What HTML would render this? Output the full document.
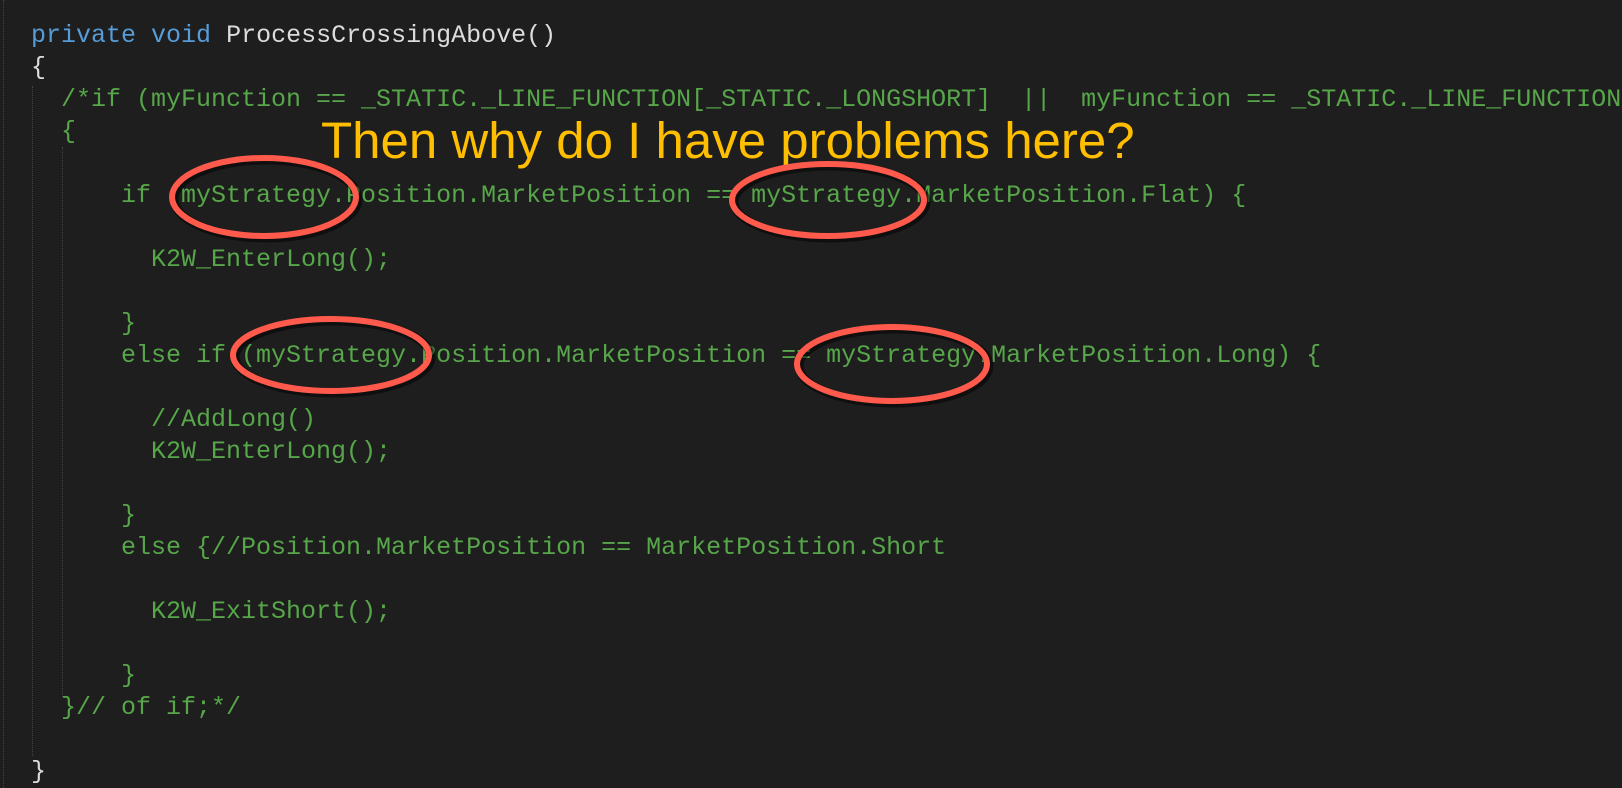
<!DOCTYPE html>
<html><head><meta charset="utf-8"><style>
html,body{margin:0;padding:0;background:#1e1e1e;width:1622px;height:788px;overflow:hidden;position:relative}
pre{position:absolute;left:31px;top:20px;margin:0;font-family:"Liberation Mono",monospace;font-size:25px;line-height:32px;color:#57a64a;white-space:pre}
.k{color:#569cd6}.w{color:#dcdcdc}
.g{position:absolute;border-left:1px dotted #444;width:0}
.t{position:absolute;left:321px;top:115px;font-family:"Liberation Sans",sans-serif;font-size:51px;line-height:1;color:#ffbf00;white-space:nowrap}
svg{position:absolute;left:0;top:0}
</style></head><body>
<div class="g" style="left:3px;top:0;height:788px"></div>
<div class="g" style="left:32px;top:86px;height:670px"></div>
<div class="g" style="left:62px;top:147px;height:550px"></div>
<pre><span class="k">private</span> <span class="k">void</span> <span class="w">ProcessCrossingAbove()</span>
<span class="w">{</span>
  /*if (myFunction == _STATIC._LINE_FUNCTION[_STATIC._LONGSHORT]  ||  myFunction == _STATIC._LINE_FUNCTION
  {

      if (myStrategy.Position.MarketPosition == myStrategy.MarketPosition.Flat) {

        K2W_EnterLong();

      }
      else if (myStrategy.Position.MarketPosition == myStrategy.MarketPosition.Long) {

        //AddLong()
        K2W_EnterLong();

      }
      else {//Position.MarketPosition == MarketPosition.Short

        K2W_ExitShort();

      }
  }// of if;*/

<span class="w">}</span></pre>
<div class="t">Then why do I have problems here?</div>
<svg width="1622" height="788">
<g fill="none" stroke="#000" stroke-opacity="0.5" stroke-width="9">
<ellipse cx="266" cy="199" rx="92" ry="39"/><ellipse cx="830" cy="202" rx="96" ry="36"/>
<ellipse cx="333" cy="357" rx="98" ry="36"/><ellipse cx="894" cy="366" rx="95" ry="37"/>
</g>
<g fill="none" stroke="#ff5a4c" stroke-width="6">
<ellipse cx="264" cy="197" rx="92" ry="39"/><ellipse cx="828" cy="200" rx="96" ry="36"/>
<ellipse cx="331" cy="355" rx="98" ry="36"/><ellipse cx="892" cy="364" rx="95" ry="37"/>
</g>
</svg>
</body></html>
